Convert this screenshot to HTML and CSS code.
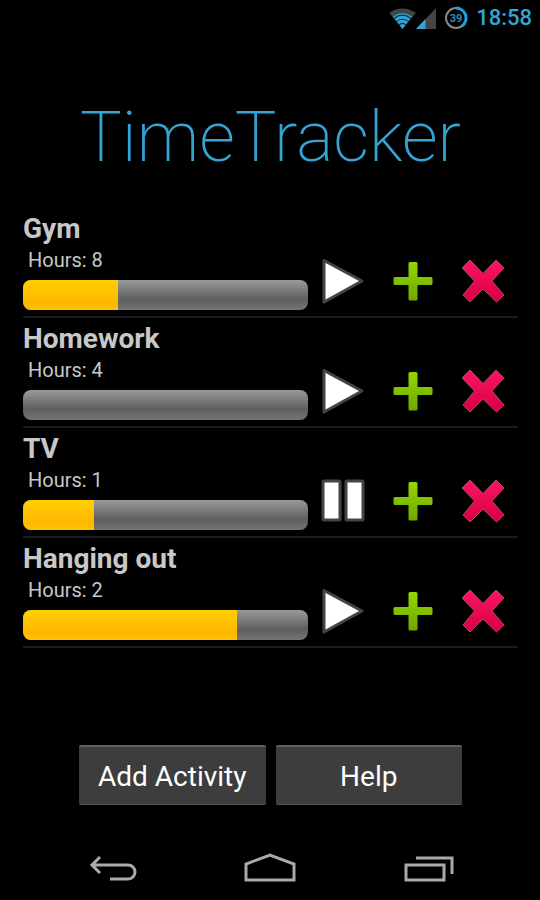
FILE: index.html
```html
<!DOCTYPE html>
<html lang="en">
<head>
    <meta charset="UTF-8">
    <meta name="viewport" content="width=device-width, initial-scale=1.0">
    <title>TimeTracker</title>
    <link rel="stylesheet" href="styles.css">
</head>
<body>
    <!-- Shared icons -->
    <svg class="icon-defs" width="0" height="0" aria-hidden="true">
        <defs>
            <linearGradient id="green" x1="0" y1="0" x2="0" y2="1">
                <stop offset="0" stop-color="#94d600"/>
                <stop offset="1" stop-color="#6fa800"/>
            </linearGradient>
            <linearGradient id="red" x1="0" y1="0" x2="0" y2="1">
                <stop offset="0" stop-color="#ff1464"/>
                <stop offset="1" stop-color="#d6003f"/>
            </linearGradient>
            <symbol id="play" viewBox="0 0 48 48">
                <path d="M5 3.500 L43 24 L5 45 Z" fill="#fff" stroke="#444" stroke-width="3" stroke-linejoin="round"/>
            </symbol>
            <symbol id="pause" viewBox="0 0 48 48">
                <rect x="4" y="4" width="17" height="39" rx="1" fill="#fff" stroke="#444" stroke-width="3"/>
                <rect x="27" y="4" width="17" height="39" rx="1" fill="#fff" stroke="#444" stroke-width="3"/>
            </symbol>
            <symbol id="plus" viewBox="0 0 48 48">
                <path d="M21 5 h6 q1.500 0 1.500 1.500 V20 H42 q1.500 0 1.500 1.500 v5 q0 1.500 -1.500 1.500 H28.500 V42 q0 1.500 -1.500 1.500 h-6 q-1.500 0 -1.500 -1.500 V28 H6 q-1.500 0 -1.500 -1.500 v-5 q0 -1.500 1.500 -1.500 H19.500 V6.500 q0 -1.500 1.500 -1.500 Z" fill="url(#green)"/>
            </symbol>
            <symbol id="cross" viewBox="0 0 48 48">
                <path d="M11 3 L24 16.500 L37 3 L45 11 L33 24 L45 38 L37.500 45 L24 32 L11 45 L4 38 L15.500 24 L3 11 Z" fill="url(#red)" stroke="#a8486a" stroke-width="1" stroke-linejoin="round"/>
            </symbol>
        </defs>
    </svg>

    <div class="screen">
        <header class="status-bar">
            <svg width="27" height="21" viewBox="0 0 28 22" aria-hidden="true">
                <path d="M0 5 Q14 -4 28 5 L14 22 Z" fill="#444"/>
                <path d="M4 9 Q14 2 24 9 L14 22 Z" fill="#33a5d5"/>
                <path d="M5 11 Q14 4 23 11 M7 14.500 Q14 9 21 14.500 M10 18 Q14 14 18 18" fill="none" stroke="#103040" stroke-width="1.200"/>
            </svg>
            <svg width="20" height="21" viewBox="0 0 21 22" aria-hidden="true">
                <path d="M21 0 V22 H0 Z" fill="#444"/>
                <path d="M10 11.500 V22 H0 Z" fill="#33a5d5"/>
            </svg>
            <svg class="battery" width="24" height="24" viewBox="0 0 24 24" role="img" aria-label="Battery 39">
                <circle cx="12" cy="12" r="10" fill="none" stroke="#888" stroke-width="2"/>
                <path d="M12 2 A10 10 0 0 1 18 20" fill="none" stroke="#1aa3e0" stroke-width="3"/>
                <text class="battery-text" x="12" y="16" text-anchor="middle">39</text>
            </svg>
            <time class="clock">18:58</time>
        </header>

        <main class="content">
            <h1>TimeTracker</h1>

            <ul class="activities">
                <li class="activity">
                    <div class="info">
                        <h2>Gym</h2>
                        <p class="hours">Hours: 8</p>
                        <div class="bar" role="progressbar" aria-label="Gym" aria-valuenow="33"><div class="fill" style="width: 33.5%"></div></div>
                    </div>
                    <button class="icon-btn" aria-label="Start Gym"><svg><use href="#play"/></svg></button>
                    <button class="icon-btn" aria-label="Add hours to Gym"><svg><use href="#plus"/></svg></button>
                    <button class="icon-btn" aria-label="Delete Gym"><svg><use href="#cross"/></svg></button>
                </li>
                <li class="activity">
                    <div class="info">
                        <h2>Homework</h2>
                        <p class="hours">Hours: 4</p>
                        <div class="bar" role="progressbar" aria-label="Homework" aria-valuenow="0"><div class="fill" style="width: 0%"></div></div>
                    </div>
                    <button class="icon-btn" aria-label="Start Homework"><svg><use href="#play"/></svg></button>
                    <button class="icon-btn" aria-label="Add hours to Homework"><svg><use href="#plus"/></svg></button>
                    <button class="icon-btn" aria-label="Delete Homework"><svg><use href="#cross"/></svg></button>
                </li>
                <li class="activity">
                    <div class="info">
                        <h2>TV</h2>
                        <p class="hours">Hours: 1</p>
                        <div class="bar" role="progressbar" aria-label="TV" aria-valuenow="25"><div class="fill" style="width: 25%"></div></div>
                    </div>
                    <button class="icon-btn" aria-label="Pause TV"><svg><use href="#pause"/></svg></button>
                    <button class="icon-btn" aria-label="Add hours to TV"><svg><use href="#plus"/></svg></button>
                    <button class="icon-btn" aria-label="Delete TV"><svg><use href="#cross"/></svg></button>
                </li>
                <li class="activity">
                    <div class="info">
                        <h2>Hanging out</h2>
                        <p class="hours">Hours: 2</p>
                        <div class="bar" role="progressbar" aria-label="Hanging out" aria-valuenow="75"><div class="fill" style="width: 75%"></div></div>
                    </div>
                    <button class="icon-btn" aria-label="Start Hanging out"><svg><use href="#play"/></svg></button>
                    <button class="icon-btn" aria-label="Add hours to Hanging out"><svg><use href="#plus"/></svg></button>
                    <button class="icon-btn" aria-label="Delete Hanging out"><svg><use href="#cross"/></svg></button>
                </li>
            </ul>
        </main>

        <div class="actions">
            <button class="btn">Add Activity</button>
            <button class="btn">Help</button>
        </div>

        <nav class="nav-bar">
            <button class="nav-btn" aria-label="Back">
                <svg width="50" height="30" viewBox="0 0 50 30">
                    <path d="M13 4 L5 12 L13 20 M5 12 H41 a7 7 0 0 1 0 14 H23"/>
                </svg>
            </button>
            <button class="nav-btn" aria-label="Home">
                <svg width="54" height="30" viewBox="0 0 54 30">
                    <path d="M3 27 V11 L27 2 L51 11 V27 Z"/>
                </svg>
            </button>
            <button class="nav-btn" aria-label="Recent apps">
                <svg width="52" height="30" viewBox="0 0 52 30">
                    <path d="M4 12 H42 V27 H4 Z M14 5 H50 V21"/>
                </svg>
            </button>
        </nav>
    </div>
</body>
</html>
```
FILE: styles.css
```css
* {
    box-sizing: border-box;
}

body {
    margin: 0;
    background: #000;
    color: #c8c8c8;
    font-family: Roboto, "Liberation Sans", sans-serif;
}

h1, h2, p, ul {
    margin: 0;
    padding: 0;
}

button {
    font-family: inherit;
    border: none;
    cursor: pointer;
}

.icon-defs {
    position: absolute;
}

.screen {
    display: flex;
    flex-direction: column;
    min-height: 100vh;
}

.status-bar {
    display: flex;
    justify-content: flex-end;
    align-items: center;
    height: 36px;
    padding: 0 8px;
}

.battery {
    margin: 0 8px;
}

.battery-text {
    fill: #2b8db8;
    font-size: 11px;
    font-weight: bold;
}

.clock {
    color: #33a5d5;
    font-size: 22px;
    font-weight: 500;
    line-height: 36px;
}

.content {
    flex: 1;
    padding: 56px 22px 0 23px;
}

h1 {
    color: #33a5d5;
    font-size: 70px;
    font-weight: 200;
    line-height: 90px;
    text-align: center;
}

.activities {
    margin-top: 26px;
    list-style: none;
}

.activity {
    display: grid;
    grid-template-columns: 1fr 70px 70px 70px;
    align-items: end;
    padding: 4px 0 6px;
    border-bottom: 2px solid #1c1c1c;
}

.activity h2 {
    font-size: 28px;
    font-weight: bold;
    line-height: 34px;
}

.hours {
    padding: 0 0 6px 5px;
    font-size: 20px;
    line-height: 28px;
}

.bar {
    height: 30px;
    border-radius: 8px;
    overflow: hidden;
    background: linear-gradient(#9a9a9a 0%, #5c5f5c 65%, #747674 100%);
}

.fill {
    height: 100%;
    background: linear-gradient(#ffd000 0%, #ffb600 75%, #ffc400 100%);
}

.icon-btn {
    display: flex;
    justify-content: center;
    padding: 0 0 5px;
    background: none;
}

.icon-btn svg {
    width: 48px;
    height: 48px;
}

.actions {
    display: flex;
    gap: 10px;
    padding: 0 78px 0 79px;
    margin-bottom: 31px;
}

.btn {
    flex: 1;
    height: 60px;
    padding: 2px 0 0;
    background: #3d3d3d;
    border-top: 2px solid #606060;
    border-bottom: 1px solid #555;
    border-radius: 2px;
    color: #fff;
    font-size: 28px;
}

.nav-bar {
    display: grid;
    grid-template-columns: 1fr 1fr 1fr;
    height: 64px;
    padding: 0 33px;
}

.nav-btn {
    display: flex;
    justify-content: center;
    align-items: center;
    padding: 0;
    background: none;
}

.nav-btn path {
    fill: none;
    stroke: #aaa;
    stroke-width: 3;
}
```
